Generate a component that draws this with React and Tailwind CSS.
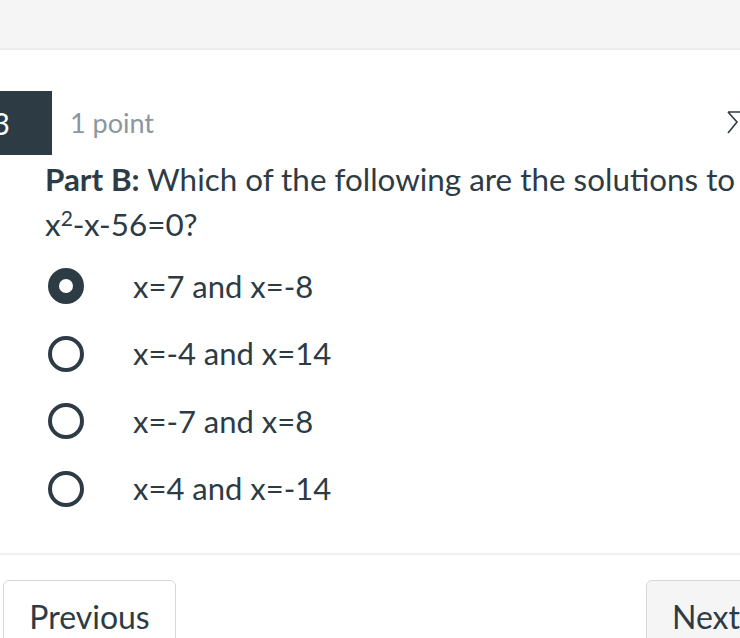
import React, { useState } from 'react';

const options = ['x=7 and x=-8', 'x=-4 and x=14', 'x=-7 and x=8', 'x=4 and x=-14'];

function Radio({ checked }) {
  return (
    <span
      className={
        checked
          ? 'box-border w-[36px] h-[36px] rounded-full bg-[#2d3b45] flex items-center justify-center shrink-0'
          : 'box-border w-[36px] h-[36px] rounded-full border-[4px] border-[#2d3b45] bg-white shrink-0'
      }
    >
      {checked && <span className="w-[14px] h-[14px] rounded-full bg-white" />}
    </span>
  );
}

export default function App() {
  const [selected, setSelected] = useState(0);

  return (
    <div className="w-[740px] h-[638px] overflow-hidden bg-white text-[#2d3b45] font-['Lato','Liberation_Sans',sans-serif]">
      {/* top bar */}
      <div className="h-[50px] bg-[#f5f5f5] border-b-2 border-[#ececec]" />

      {/* question header */}
      <div className="mt-[41px] flex items-center w-[760px]">
        <div className="w-[52px] h-[64px] bg-[#2d3b45] text-white text-[30px] flex items-center justify-end pr-[42px] overflow-hidden">
          3
        </div>
        <div className="ml-[18px] text-[27px] text-[#8b969e] font-normal">1 point</div>
        <div className="ml-auto mr-[14px] w-[20px] h-[26px]">
          <svg viewBox="0 0 20 26" className="w-[20px] h-[26px]" fill="none" stroke="#2d3b45" strokeWidth="1.6">
            <path d="M2 2 L18 2 M2 2 L11 12 L2 23" />
          </svg>
        </div>
      </div>

      {/* question text */}
      <div className="pl-[45px] mt-[2px] w-[780px] text-[31.4px] leading-[45px]">
        <div className="whitespace-nowrap">
          <span className="font-bold">Part B:</span> Which of the following are the solutions to
        </div>
        <div>
          x<sup className="text-[21px]">2</sup>-x-56=0?
        </div>
      </div>

      {/* answers */}
      <div className="mt-[21px] flex flex-col gap-[31.5px]">
        {options.map((opt, i) => (
          <label key={opt} className="flex items-center h-[36px] pl-[48px] cursor-pointer" onClick={() => setSelected(i)}>
            <Radio checked={selected === i} />
            <span className="ml-[49px] text-[31px]">{opt}</span>
          </label>
        ))}
      </div>

      <div className="mt-[46px] border-t-2 border-[#f0f0f0]" />

      {/* nav buttons */}
      <div className="mt-[25px] flex justify-between w-[780px]">
        <button className="ml-[3px] w-[173px] h-[70px] bg-white border border-[#d7d7d7] rounded-[6px] text-[32px] text-[#2d3b45] flex pt-[12px] justify-center">
          Previous
        </button>
        <button className="w-[134px] h-[70px] bg-[#f5f5f5] border border-[#d7d7d7] rounded-[6px] text-[32px] text-[#2d3b45] flex pt-[12px] pl-[25px]">
          Next
        </button>
      </div>
    </div>
  );
}
